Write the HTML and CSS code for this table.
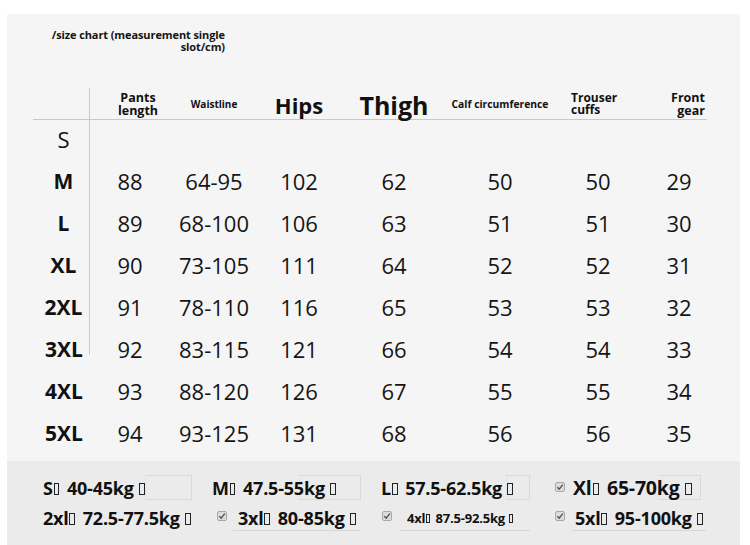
FILE: index.html
```html
<!DOCTYPE html>
<html>
<head>
<meta charset="utf-8">
<link rel="stylesheet" href="styles.css">
</head>
<body>
<div class="page">
  <div class="panel">
    <div class="title">/size chart (measurement single<br>slot/cm)</div>
    <div class="chart">
      <div class="hd h-corner"></div>
      <div class="hd h-pants"><span>Pants<br>length</span></div>
      <div class="hd h-small">Waistline</div>
      <div class="hd h-hips">Hips</div>
      <div class="hd h-thigh">Thigh</div>
      <div class="hd h-small h-calf">Calf circumference</div>
      <div class="hd h-cuffs"><span>Trouser<br>cuffs</span></div>
      <div class="hd h-front"><span>Front<br>gear</span></div>

      <div class="sz sz-s ln">S</div><div></div><div></div><div></div><div></div><div></div><div></div><div></div>

      <div class="sz ln">M</div><div class="v">88</div><div class="v">64-95</div><div class="v">102</div><div class="v">62</div><div class="v">50</div><div class="v">50</div><div class="v v7">29</div>
      <div class="sz ln">L</div><div class="v">89</div><div class="v">68-100</div><div class="v">106</div><div class="v">63</div><div class="v">51</div><div class="v">51</div><div class="v v7">30</div>
      <div class="sz ln">XL</div><div class="v">90</div><div class="v">73-105</div><div class="v">111</div><div class="v">64</div><div class="v">52</div><div class="v">52</div><div class="v v7">31</div>
      <div class="sz ln">2XL</div><div class="v">91</div><div class="v">78-110</div><div class="v">116</div><div class="v">65</div><div class="v">53</div><div class="v">53</div><div class="v v7">32</div>
      <div class="sz ln-part">3XL</div><div class="v">92</div><div class="v">83-115</div><div class="v">121</div><div class="v">66</div><div class="v">54</div><div class="v">54</div><div class="v v7">33</div>
      <div class="sz">4XL</div><div class="v">93</div><div class="v">88-120</div><div class="v">126</div><div class="v">67</div><div class="v">55</div><div class="v">55</div><div class="v v7">34</div>
      <div class="sz">5XL</div><div class="v">94</div><div class="v">93-125</div><div class="v">131</div><div class="v">68</div><div class="v">56</div><div class="v">56</div><div class="v v7">35</div>
    </div>
  </div>

  <div class="weights">
    <div class="w boxed b1"><span class="wt">S<span class="tofu"></span> 40-45kg <span class="tofu"></span></span></div>
    <div class="w boxed b2"><span class="wt">M<span class="tofu"></span> 47.5-55kg <span class="tofu"></span></span></div>
    <div class="w boxed b3"><span class="wt">L<span class="tofu"></span> 57.5-62.5kg <span class="tofu"></span></span></div>
    <div class="w boxed b4 cD">
      <svg class="cb" viewBox="0 0 10 10" width="10" height="10"><rect x="0.5" y="0.5" width="9" height="9" rx="1.5" fill="#dcdcdc" stroke="#a9a9a9"/><path d="M2.3 5.2 L4.2 7.1 L7.8 2.6" fill="none" stroke="#555" stroke-width="1.4"/></svg>
      <span class="wt big">Xl<span class="tofu"></span> 65-70kg <span class="tofu"></span></span>
    </div>

    <div class="w"><span class="wt">2xl<span class="tofu"></span> 72.5-77.5kg <span class="tofu"></span></span></div>
    <div class="w cB">
      <svg class="cb" viewBox="0 0 10 10" width="10" height="10"><rect x="0.5" y="0.5" width="9" height="9" rx="1.5" fill="#dcdcdc" stroke="#a9a9a9"/><path d="M2.3 5.2 L4.2 7.1 L7.8 2.6" fill="none" stroke="#555" stroke-width="1.4"/></svg>
      <span class="ul"><span class="wt">3xl<span class="tofu"></span> 80-85kg <span class="tofu"></span></span></span>
    </div>
    <div class="w cC">
      <svg class="cb" viewBox="0 0 10 10" width="10" height="10"><rect x="0.5" y="0.5" width="9" height="9" rx="1.5" fill="#dcdcdc" stroke="#a9a9a9"/><path d="M2.3 5.2 L4.2 7.1 L7.8 2.6" fill="none" stroke="#555" stroke-width="1.4"/></svg>
      <span class="ul"><span class="wt small">4xl<span class="tofu"></span> 87.5-92.5kg <span class="tofu"></span></span></span>
    </div>
    <div class="w cD">
      <svg class="cb" viewBox="0 0 10 10" width="10" height="10"><rect x="0.5" y="0.5" width="9" height="9" rx="1.5" fill="#dcdcdc" stroke="#a9a9a9"/><path d="M2.3 5.2 L4.2 7.1 L7.8 2.6" fill="none" stroke="#555" stroke-width="1.4"/></svg>
      <span class="ul"><span class="wt">5xl<span class="tofu"></span> 95-100kg <span class="tofu"></span></span></span>
    </div>
  </div>
</div>
</body>
</html>
```

FILE: styles.css
```css
* { box-sizing: border-box; }
html, body { margin: 0; padding: 0; background: #ffffff; }
body {
  width: 750px;
  height: 545px;
  overflow: hidden;
  font-family: "Open Sans", "Noto Sans", sans-serif;
  color: #141414;
}
.page {
  padding-top: 14px;
  padding-left: 7px;
  width: 740px;
}
.panel {
  background: #f5f5f5;
  width: 733px;
  height: 447px;
  padding-top: 15px;
}
.title {
  font-size: 11px;
  font-weight: 700;
  line-height: 12px;
  text-align: right;
  width: 218px;
  letter-spacing: -0.1px;
}
.chart {
  display: grid;
  grid-template-columns: 57px 80px 88px 82px 108px 104px 92px 63px;
  grid-template-rows: 32px repeat(8, 42px);
  margin-left: 26px;
  margin-top: 35px;
  width: 674px;
}
.hd {
  border-bottom: 1px solid #c9c9c9;
  display: flex;
  align-items: flex-end;
  justify-content: center;
  font-weight: 700;
  color: #111;
  padding-bottom: 2px;
  white-space: nowrap;
}
.h-corner {
  border-right: 1px solid #c9c9c9;
  background: linear-gradient(#f5f5f5, #f5f5f5) right top / 1px 2px no-repeat;
}
.h-pants {
  font-size: 12.5px;
  line-height: 13px;
  text-align: center;
  padding-left: 16px;
  padding-bottom: 2px;
}
.h-small {
  font-size: 10px;
  align-items: center;
  padding-top: 2px;
}
.h-hips {
  font-size: 22px;
  line-height: 26px;
  padding-bottom: 1px;
}
.h-thigh {
  font-size: 25px;
  line-height: 28px;
  padding-bottom: 0;
}
.h-calf { font-size: 10.3px; }
.h-cuffs {
  font-size: 12px;
  line-height: 12px;
  justify-content: flex-start;
  padding-left: 19px;
  padding-bottom: 3px;
}
.h-front {
  font-size: 12.5px;
  line-height: 13px;
  justify-content: flex-end;
  text-align: right;
  padding-right: 2px;
  padding-bottom: 2px;
}
.sz {
  display: flex;
  align-items: center;
  justify-content: center;
  font-size: 21px;
  font-weight: 700;
  color: #111;
  padding-left: 5px;
  padding-bottom: 4px;
}
.ln { border-right: 1px solid #c9c9c9; }
.ln-part {
  background: linear-gradient(#c9c9c9, #c9c9c9) right top / 1px 25px no-repeat;
}
.sz-s { font-weight: 500; font-size: 22px; }
.v {
  display: flex;
  align-items: center;
  justify-content: center;
  font-size: 22px;
  font-weight: 400;
  color: #151515;
  padding-bottom: 4px;
}
.v7 { padding-left: 7px; }

.weights {
  background: #ebebeb;
  width: 733px;
  height: 84px;
  padding: 14px 0 0 33px;
  display: grid;
  grid-template-columns: repeat(4, 152px);
  column-gap: 17px;
  row-gap: 5px;
  grid-template-rows: 25px 26px;
}
.w {
  position: relative;
  display: flex;
  align-items: center;
  padding-left: 3px;
  white-space: nowrap;
}
.wt {
  position: relative;
  font-size: 18px;
  font-weight: 700;
  color: #111;
  letter-spacing: -0.2px;
}
.wt.big { font-size: 19.5px; }
.wt.small { font-size: 13px; }
.tofu {
  display: inline-block;
  width: 0.32em;
  height: 0.66em;
  border: 1px solid #222;
  margin: 0 0.17em 0 0.05em;
  vertical-align: -0.02em;
}
.boxed::before {
  content: "";
  position: absolute;
  right: 0;
  top: 0;
  bottom: 0;
  border: 1px solid #d9d9d9;
  border-left-color: #e4e4e4;
}
.b1::before { width: 45px; }
.b2::before { width: 60px; }
.b3::before { width: 22px; }
.b4::before { width: 39px; right: -2px; }
.cb {
  flex: none;
  align-self: flex-start;
  margin-top: 6px;
}
.cB { padding-left: 8px; }
.cC { padding-left: 4px; }
.cD { padding-left: 8px; }
.ul {
  flex: 1;
  align-self: stretch;
  display: flex;
  align-items: center;
  border-bottom: 1px solid #d6d6d6;
}
.cB .ul { margin-left: 6px; padding-left: 5px; }
.cC .ul { margin-left: 8px; padding-left: 7px; }
.cD .ul { margin-left: 7px; padding-left: 3px; }
.cD .wt.big { margin-left: 8px; }
.b4 .cb { margin-top: 7px; }
```
